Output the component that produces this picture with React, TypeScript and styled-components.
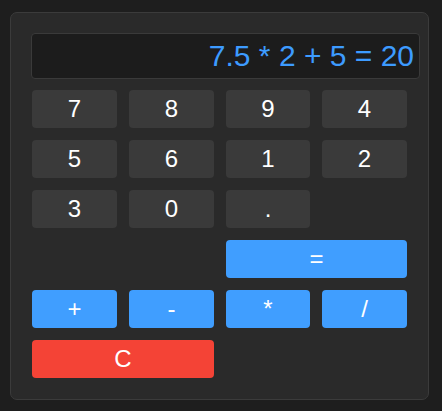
import React from "react";
import styled, { createGlobalStyle } from "styled-components";

const Global = createGlobalStyle`
  html, body { margin: 0; padding: 0; background: #1e1e1e; }
  body { font-family: "Liberation Sans", Arial, sans-serif; }
  * { box-sizing: border-box; }
`;

const Page = styled.div`
  padding: 12px 0 0 10px;
`;

const Card = styled.div`
  width: 419px;
  height: 388px;
  background: #2a2a2a;
  border: 1px solid #3b3b3b;
  border-radius: 7px;
  padding: 20px 20px 20px 20px;
  display: flex;
  flex-direction: column;
  gap: 11px;
`;

const Display = styled.div`
  width: 389px;
  height: 46px;
  background: #1c1c1c;
  border: 1px solid #3a3a3a;
  border-radius: 4px;
  padding: 0 5px;
  display: flex;
  align-items: center;
  justify-content: flex-end;
  color: #3d9bff;
  font-size: 30px;
  line-height: 1;
`;

const Grid = styled.div`
  margin-left: 1px;
  width: 375px;
  display: grid;
  grid-template-columns: 85px 85px 84px 85px;
  grid-auto-rows: 38px;
  column-gap: 12px;
  row-gap: 12px;
`;

type Variant = "num" | "op" | "clear";

const Key = styled.button<{ $variant: Variant; $span?: number; $col?: number }>`
  border: none;
  border-radius: 4px;
  margin: 0;
  padding: 0;
  font-family: "Liberation Sans", Arial, sans-serif;
  font-size: 24px;
  line-height: 1;
  color: #ffffff;
  display: flex;
  align-items: center;
  justify-content: center;
  background: ${(p) =>
    p.$variant === "op" ? "#409eff" : p.$variant === "clear" ? "#f44336" : "#3a3a3a"};
  grid-column: ${(p) =>
    p.$col ? `${p.$col} / span ${p.$span ?? 1}` : `span ${p.$span ?? 1}`};
`;

export default function App() {
  const nums = ["7", "8", "9", "4", "5", "6", "1", "2", "3", "0", "."];
  return (
    <>
      <Global />
      <Page>
        <Card>
          <Display>7.5 * 2 + 5 = 20</Display>
          <Grid>
            {nums.map((n) => (
              <Key key={n} $variant="num">{n}</Key>
            ))}
            <Key $variant="op" $col={3} $span={2}>=</Key>
            <Key $variant="op">+</Key>
            <Key $variant="op">-</Key>
            <Key $variant="op">*</Key>
            <Key $variant="op">/</Key>
            <Key $variant="clear" $span={2}>C</Key>
          </Grid>
        </Card>
      </Page>
    </>
  );
}
